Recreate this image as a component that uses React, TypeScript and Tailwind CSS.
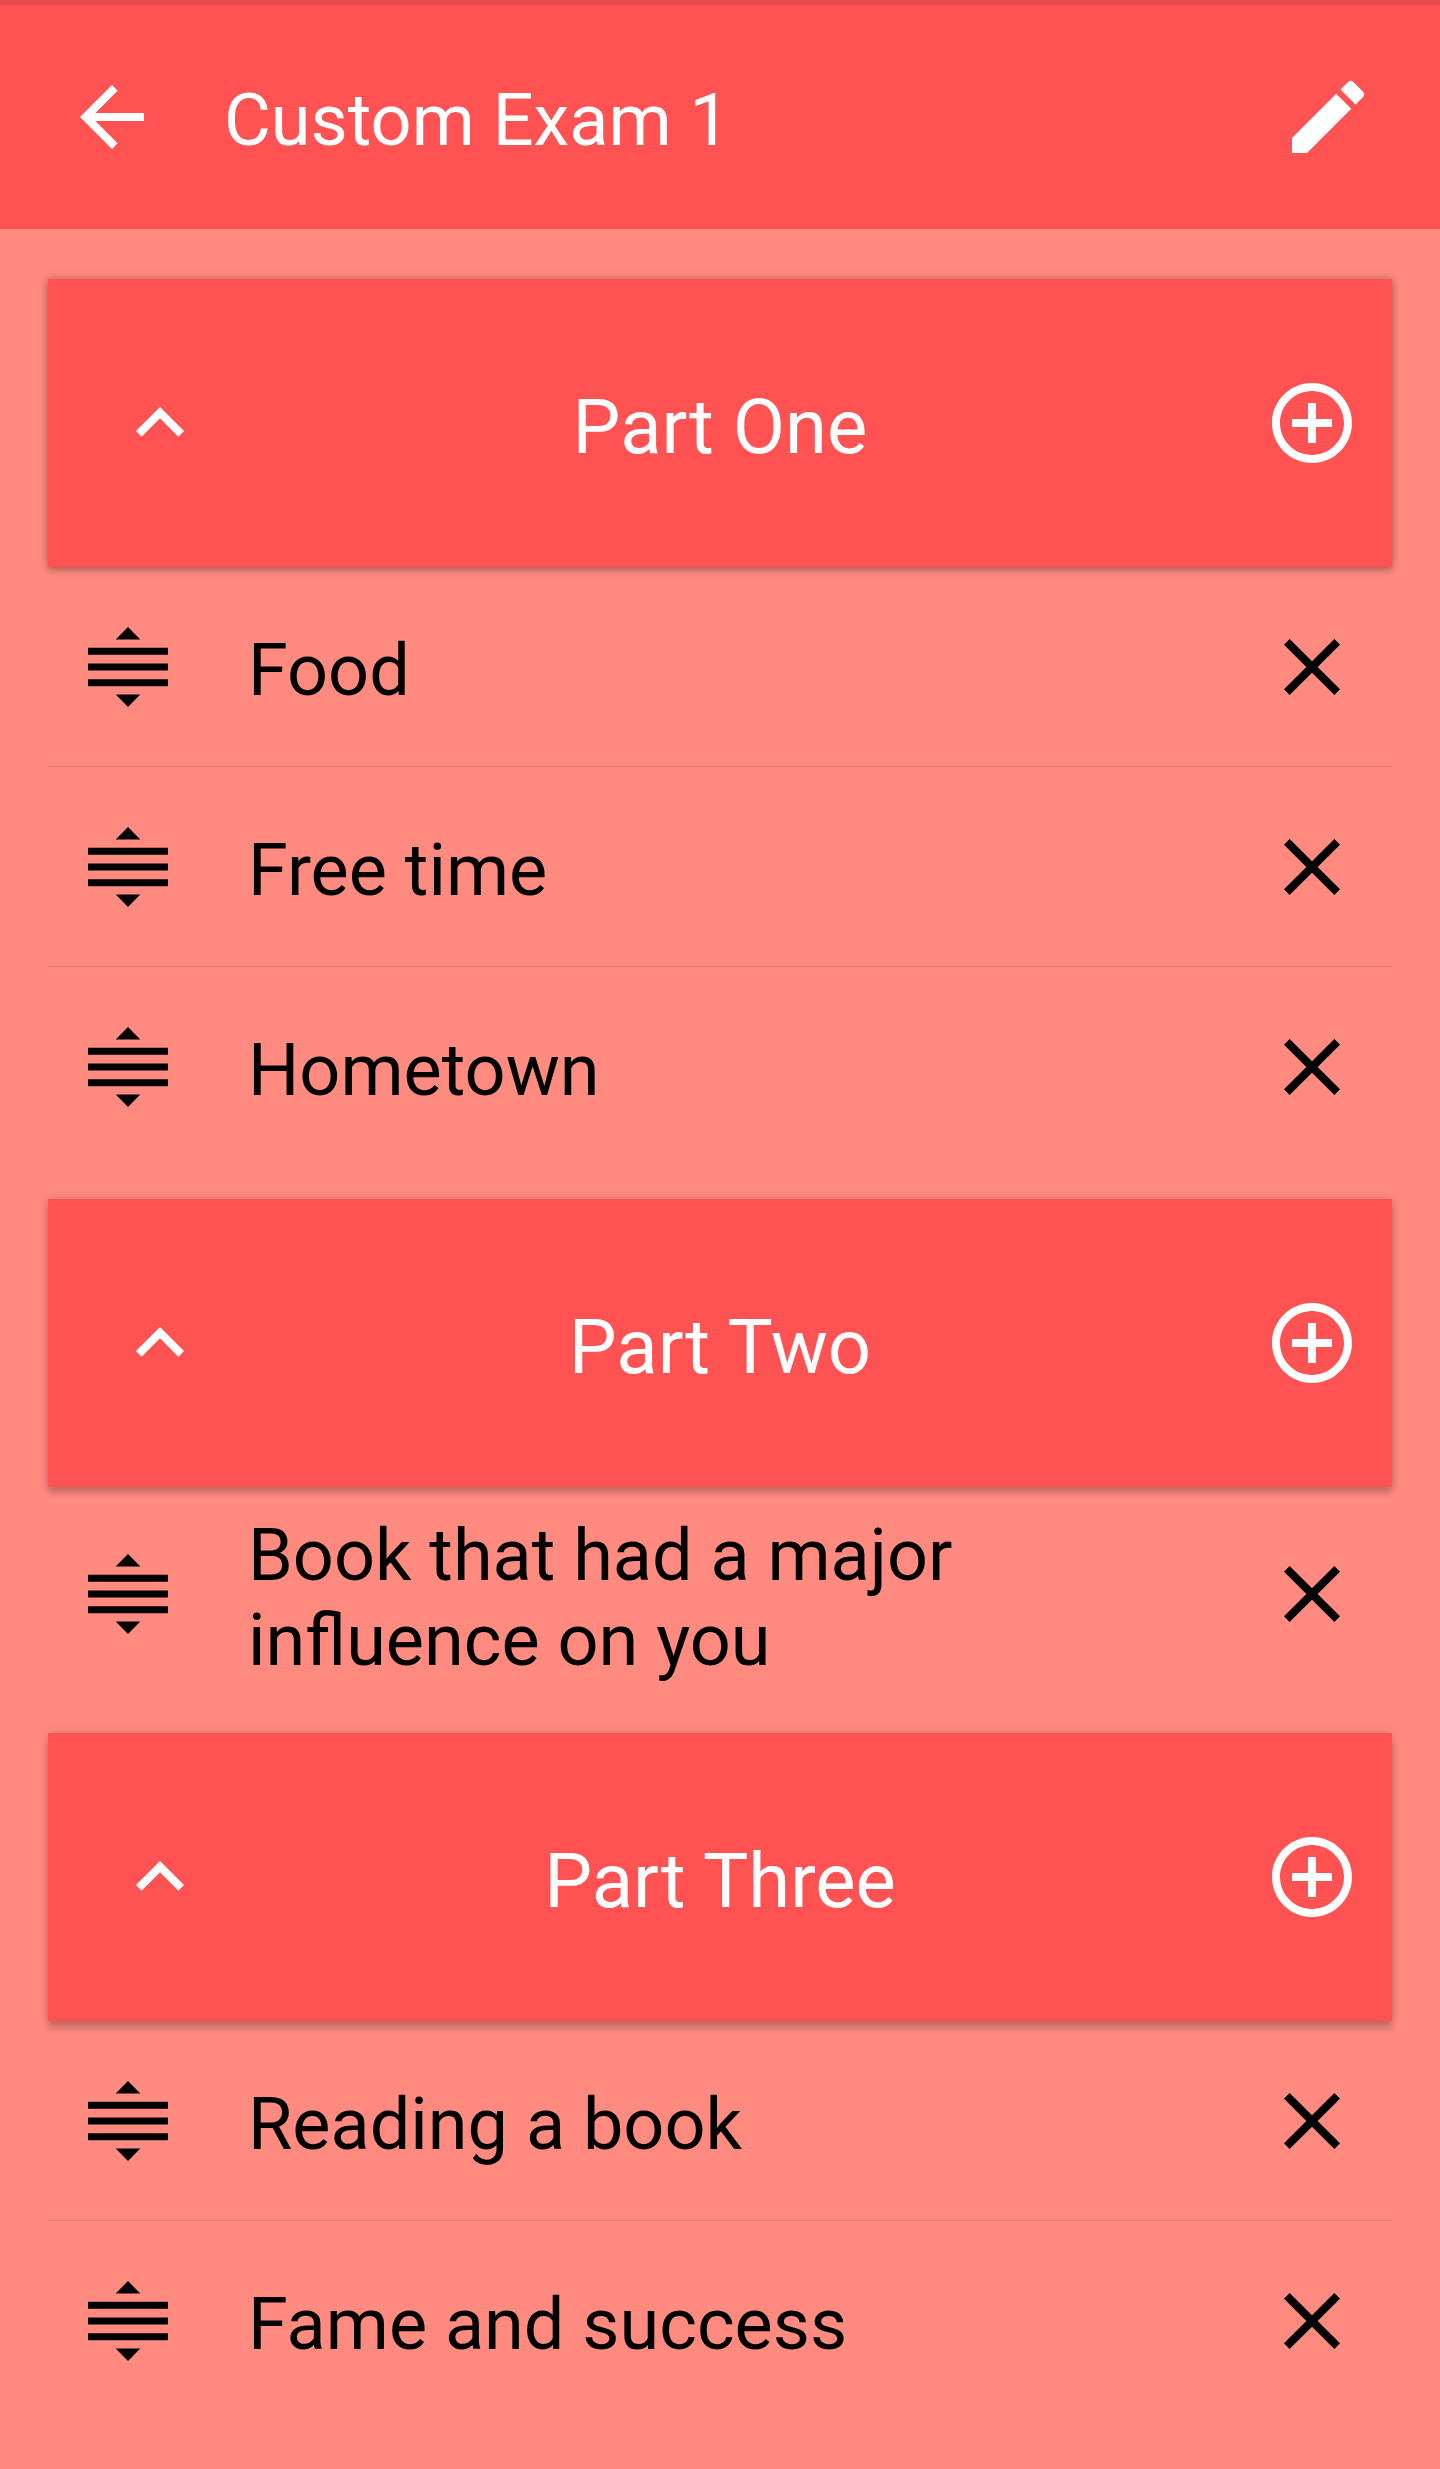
import { useState } from 'react'
import { MdAddCircleOutline, MdArrowBack, MdClose, MdEdit, MdExpandLess, MdExpandMore } from 'react-icons/md'

type Part = {
  title: string
  shadow: string
  topics: string[]
}

const PARTS: Part[] = [
  {
    title: 'Part One',
    shadow: 'shadow-[0_3px_7px_rgba(0,0,0,0.22),0_0_9px_rgba(0,0,0,0.22)]',
    topics: ['Food', 'Free time', 'Hometown'],
  },
  {
    title: 'Part Two',
    shadow: 'shadow-[0_6px_7px_rgba(0,0,0,0.18),0_0_9px_rgba(0,0,0,0.16)]',
    topics: ['Book that had a major influence on you'],
  },
  {
    title: 'Part Three',
    shadow: 'shadow-[0_8px_7px_rgba(0,0,0,0.18),0_0_9px_rgba(0,0,0,0.14)]',
    topics: ['Reading a book', 'Fame and success'],
  },
]

function DragIcon() {
  return (
    <svg className="w-20 h-20 shrink-0" viewBox="0 0 80 80" fill="currentColor">
      <path d="M40 0L52.3 12.6H27.7z" />
      <path d="M0 20.8h80v6.9H0zM0 36.6h80v6.8H0zM0 52.3h80v6.9H0z" />
      <path d="M40 80L27.7 67.4h24.6z" />
    </svg>
  )
}

function TopicRow({ name, last, onRemove }: { name: string; last: boolean; onRemove: () => void }) {
  return (
    <li className="relative flex items-center min-h-[200px] py-[18.5px] pl-10 pr-8 text-black">
      <DragIcon />
      <span className="flex-1 ml-20 mr-[160px] pt-[7px] text-[72px] leading-[85px]">{name}</span>
      <button onClick={onRemove} aria-label={`Remove ${name}`}>
        <MdClose className="w-24 h-24" />
      </button>
      {!last && <span className="absolute inset-x-0 bottom-0 h-px bg-black/12" />}
    </li>
  )
}

function PartSection({ part }: { part: Part }) {
  const [open, setOpen] = useState(true)
  const [topics, setTopics] = useState(part.topics)

  return (
    <section>
      <div className={`flex items-center justify-between h-72 pl-16 pr-8 bg-[#ff5252] ${part.shadow}`}>
        <button onClick={() => setOpen(!open)} aria-label="Toggle part">
          {open ? <MdExpandLess className="w-24 h-24" /> : <MdExpandMore className="w-24 h-24" />}
        </button>
        <h2 className="flex-1 pr-8 pt-[7px] text-center text-[76px] leading-[90px]">{part.title}</h2>
        <button aria-label="Add topic">
          <MdAddCircleOutline className="w-24 h-24" />
        </button>
      </div>
      {open && (
        <ul>
          {topics.map((topic, i) => (
            <TopicRow
              key={topic}
              name={topic}
              last={i === topics.length - 1}
              onRemove={() => setTopics(topics.filter((t) => t !== topic))}
            />
          ))}
        </ul>
      )}
    </section>
  )
}

export default function App() {
  return (
    <div className="min-h-[2469px] bg-[#ff8a80] font-['Roboto',sans-serif] text-white">
      {/* Status bar edge */}
      <div className="h-[5px] bg-[#e64a4a]" />

      {/* Toolbar */}
      <header className="flex items-center h-56 px-16 bg-[#ff5252]">
        <button aria-label="Back">
          <MdArrowBack className="w-24 h-24" />
        </button>
        <h1 className="flex-1 ml-16 pt-[7px] text-[72px] leading-[85px]">Custom Exam 1</h1>
        <button aria-label="Edit">
          <MdEdit className="w-24 h-24" />
        </button>
      </header>

      {/* Parts */}
      <main className="flex flex-col gap-8 px-12 pt-[50px]">
        {PARTS.map((part) => (
          <PartSection key={part.title} part={part} />
        ))}
      </main>
    </div>
  )
}
